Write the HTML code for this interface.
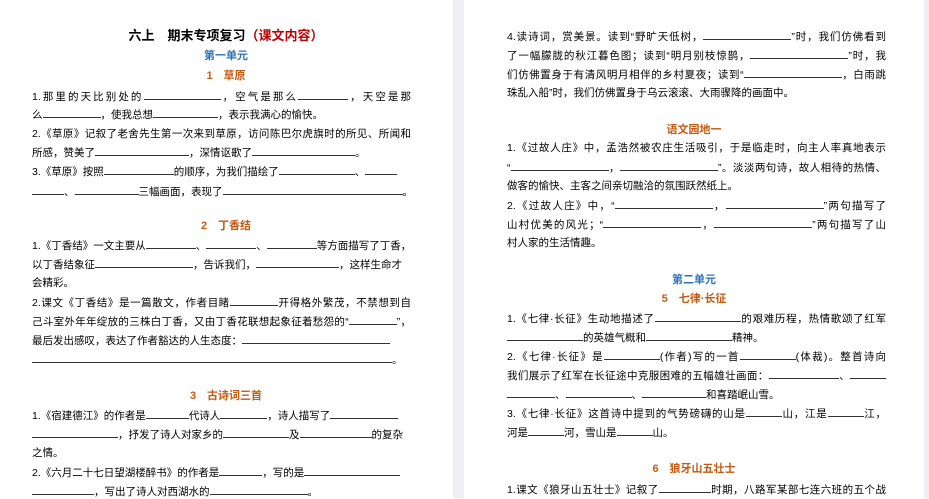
<!DOCTYPE html>
<html><head><meta charset="utf-8"><style>
body{margin:0;width:929px;height:498px;overflow:hidden;background:#fff;position:relative;font-family:"Liberation Sans","Noto Sans CJK SC",sans-serif;color:#000;}
.gap{position:absolute;top:0;height:498px;background:#eef0f4;}
.l{position:absolute;font-size:10.5px;line-height:14px;white-space:nowrap;}
.j{text-align:justify;text-align-last:justify;}
.u{display:inline-block;border-bottom:1px solid #333;height:10px;vertical-align:baseline;}
.h{position:absolute;font-size:11px;font-weight:bold;text-align:center;line-height:14px;}
.b{color:#2e74b5}.o{color:#c55a11}
</style></head><body>
<div class="gap" style="left:453px;width:11px"></div>
<div class="gap" style="left:924px;width:5px"></div>

<div class="h" style="left:0;width:452px;top:29px;font-size:13px">六上　期末专项复习<span style="color:#c00000">（课文内容）</span></div>
<div class="h b" style="left:0;width:452px;top:49px">第一单元</div>
<div class="h o" style="left:0;width:452px;top:69px">1　草原</div>
<div class="l j" style="left:32px;width:379px;top:89px">1.那里的天比别处的<span class="u" style="width:77px"></span>，空气是那么<span class="u" style="width:50px"></span>，天空是那</div>
<div class="l" style="left:32px;top:107px">么<span class="u" style="width:58px"></span>，使我总想<span class="u" style="width:65px"></span>，表示我满心的愉快。</div>
<div class="l j" style="left:32px;width:379px;top:127px">2.《草原》记叙了老舍先生第一次来到草原，访问陈巴尔虎旗时的所见、所闻和</div>
<div class="l" style="left:32px;top:145px">所感，赞美了<span class="u" style="width:94px"></span>，深情讴歌了<span class="u" style="width:103px"></span>。</div>
<div class="l" style="left:32px;top:164px">3.《草原》按照<span class="u" style="width:70px"></span>的顺序，为我们描绘了<span class="u" style="width:76px"></span>、<span class="u" style="width:32px"></span></div>
<div class="l" style="left:32px;top:184px"><span class="u" style="width:32px"></span>、<span class="u" style="width:64px"></span>三幅画面，表现了<span class="u" style="width:180px"></span>。</div>

<div class="h o" style="left:0;width:452px;top:219px">2　丁香结</div>
<div class="l j" style="left:32px;width:379px;top:238px">1.《丁香结》一文主要从<span class="u" style="width:50px"></span>、<span class="u" style="width:50px"></span>、<span class="u" style="width:50px"></span>等方面描写了丁香，</div>
<div class="l" style="left:32px;top:257px">以丁香结象征<span class="u" style="width:98px"></span>，告诉我们，<span class="u" style="width:83px"></span>，这样生命才</div>
<div class="l" style="left:32px;top:276px">会精彩。</div>
<div class="l j" style="left:32px;width:379px;top:295px">2.课文《丁香结》是一篇散文，作者目睹<span class="u" style="width:48px"></span>开得格外繁茂，不禁想到自</div>
<div class="l j" style="left:32px;width:379px;top:314px">己斗室外年年绽放的三株白丁香，又由丁香花联想起象征着愁怨的“<span class="u" style="width:48px"></span>”，</div>
<div class="l" style="left:32px;top:333px">最后发出感叹，表达了作者豁达的人生态度：<span class="u" style="width:148px"></span></div>
<div class="l" style="left:32px;top:352px"><span class="u" style="width:360px"></span>。</div>

<div class="h o" style="left:0;width:452px;top:389px">3　古诗词三首</div>
<div class="l" style="left:32px;top:408px">1.《宿建德江》的作者是<span class="u" style="width:43px"></span>代诗人<span class="u" style="width:47px"></span>，诗人描写了<span class="u" style="width:68px"></span></div>
<div class="l" style="left:32px;top:427px"><span class="u" style="width:86px"></span>，抒发了诗人对家乡的<span class="u" style="width:66px"></span>及<span class="u" style="width:72px"></span>的复杂</div>
<div class="l" style="left:32px;top:446px">之情。</div>
<div class="l" style="left:32px;top:465px">2.《六月二十七日望湖楼醉书》的作者是<span class="u" style="width:43px"></span>，写的是<span class="u" style="width:96px"></span></div>
<div class="l" style="left:32px;top:484px"><span class="u" style="width:62px"></span>，写出了诗人对西湖水的<span class="u" style="width:98px"></span>。</div>

<div class="l j" style="left:507px;width:379px;top:29px">4.读诗词，赏美景。读到“野旷天低树，<span class="u" style="width:88px"></span>”时，我们仿佛看到</div>
<div class="l j" style="left:507px;width:379px;top:48px">了一幅朦胧的秋江暮色图；读到“明月别枝惊鹊，<span class="u" style="width:98px"></span>”时，我</div>
<div class="l j" style="left:507px;width:379px;top:67px">们仿佛置身于有清风明月相伴的乡村夏夜；读到“<span class="u" style="width:98px"></span>，白雨跳</div>
<div class="l" style="left:507px;top:86px">珠乱入船”时，我们仿佛置身于乌云滚滚、大雨骤降的画面中。</div>

<div class="h o" style="left:464px;width:460px;top:123px">语文园地一</div>
<div class="l j" style="left:507px;width:379px;top:141px">1.《过故人庄》中，孟浩然被农庄生活吸引，于是临走时，向主人率真地表示</div>
<div class="l j" style="left:507px;width:379px;top:160px">“<span class="u" style="width:98px"></span>，<span class="u" style="width:98px"></span>”。淡淡两句诗，故人相待的热情、</div>
<div class="l" style="left:507px;top:179px">做客的愉快、主客之间亲切融洽的氛围跃然纸上。</div>
<div class="l j" style="left:507px;width:379px;top:198px">2.《过故人庄》中，“<span class="u" style="width:98px"></span>，<span class="u" style="width:98px"></span>”两句描写了</div>
<div class="l j" style="left:507px;width:379px;top:217px">山村优美的风光；“<span class="u" style="width:98px"></span>，<span class="u" style="width:98px"></span>”两句描写了山</div>
<div class="l" style="left:507px;top:236px">村人家的生活情趣。</div>

<div class="h b" style="left:464px;width:460px;top:273px">第二单元</div>
<div class="h o" style="left:464px;width:460px;top:292px">5　七律·长征</div>
<div class="l j" style="left:507px;width:379px;top:311px">1.《七律·长征》生动地描述了<span class="u" style="width:86px"></span>的艰难历程，热情歌颂了红军</div>
<div class="l" style="left:507px;top:330px"><span class="u" style="width:76px"></span>的英雄气概和<span class="u" style="width:86px"></span>精神。</div>
<div class="l j" style="left:507px;width:379px;top:349px">2.《七律·长征》是<span class="u" style="width:56px"></span>(作者)写的一首<span class="u" style="width:56px"></span>(体裁)。整首诗向</div>
<div class="l j" style="left:507px;width:379px;top:368px">我们展示了红军在长征途中克服困难的五幅雄壮画面：<span class="u" style="width:70px"></span>、<span class="u" style="width:36px"></span></div>
<div class="l" style="left:507px;top:387px"><span class="u" style="width:48px"></span>、<span class="u" style="width:66px"></span>、<span class="u" style="width:64px"></span>和喜踏岷山雪。</div>
<div class="l j" style="left:507px;width:379px;top:406px">3.《七律·长征》这首诗中提到的气势磅礴的山是<span class="u" style="width:36px"></span>山，江是<span class="u" style="width:36px"></span>江，</div>
<div class="l" style="left:507px;top:425px">河是<span class="u" style="width:36px"></span>河，雪山是<span class="u" style="width:36px"></span>山。</div>

<div class="h o" style="left:464px;width:460px;top:462px">6　狼牙山五壮士</div>
<div class="l j" style="left:507px;width:379px;top:482px">1.课文《狼牙山五壮士》记叙了<span class="u" style="width:52px"></span>时期，八路军某部七连六班的五个战</div>
</body></html>
